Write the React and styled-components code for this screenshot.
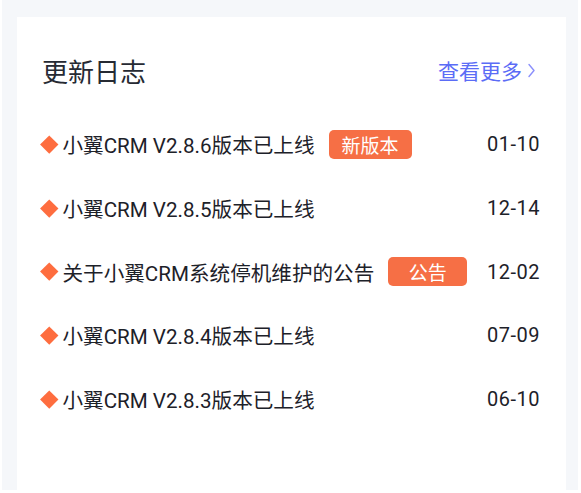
import styled, { createGlobalStyle } from "styled-components";

// --------------------------------------------------

const GlobalStyle = createGlobalStyle`
	body {
		margin: 0;
		background: #ffffff;
		font-family: Roboto, "Noto Sans CJK SC", sans-serif;
	}
`;

const Page = styled.div`
	height: 490px;
	margin: 0 3px 0 2px;
	padding: 17px 12px 0 15px;
	box-sizing: border-box;
	background: #f5f7fa;
`;

const Card = styled.section`
	height: 100%;
	background: #ffffff;
	padding: 30px 26px 0 24px;
	box-sizing: border-box;
`;

const Header = styled.header`
	display: flex;
	align-items: center;
	justify-content: space-between;
	height: 46px;
	padding: 0 5px 0 1px;
	margin-bottom: 19.5px;
`;

const Title = styled.h2`
	margin: 0;
	font-size: 26px;
	font-weight: 400;
	color: #262a33;
`;

const More = styled.a`
	display: flex;
	align-items: center;
	gap: 6px;
	font-size: 21px;
	color: #5b6cf6;
	text-decoration: none;
	cursor: pointer;
`;

const List = styled.ul`
	list-style: none;
	margin: 0;
	padding: 0;
`;

const Row = styled.li`
	display: flex;
	align-items: center;
	height: 63.7px;
	font-size: 20.6px;
	color: #1d2129;
`;

const Diamond = styled.i`
	width: 12.5px;
	height: 12.5px;
	margin: 0 7px 0 2px;
	background: #fe6d3f;
	transform: rotate(45deg);
	flex: none;
`;

const Name = styled.span`
	white-space: nowrap;
`;

const Badge = styled.span`
	min-width: 79px;
	height: 29px;
	margin-left: 14px;
	padding: 0 13px;
	box-sizing: border-box;
	display: inline-flex;
	align-items: center;
	justify-content: center;
	border-radius: 5px;
	background: #f66f45;
	color: #ffffff;
	font-size: 19px;
`;

const Date = styled.span`
	margin-left: auto;
	font-size: 20px;
	font-variant-numeric: tabular-nums;
	letter-spacing: 0.5px;
`;

// --------------------------------------------------

const logs = [
	{ name: "小翼CRM V2.8.6版本已上线", tag: "新版本", date: "01-10" },
	{ name: "小翼CRM V2.8.5版本已上线", date: "12-14" },
	{ name: "关于小翼CRM系统停机维护的公告", tag: "公告", date: "12-02" },
	{ name: "小翼CRM V2.8.4版本已上线", date: "07-09" },
	{ name: "小翼CRM V2.8.3版本已上线", date: "06-10" },
];

const Chevron = () =>
	<svg width = "7" height = "15" viewBox = "0 0 7 15" fill = "none">
		<path d = "M1 1.5 L6 7.5 L1 13.5" stroke = "#8b8ffc" strokeWidth = "1.4" strokeLinecap = "round" strokeLinejoin = "round"/>
	</svg>;

const App = () => (
	<Page>
		<GlobalStyle />
		<Card>
			<Header>
				<Title>更新日志</Title>
				<More>查看更多<Chevron /></More>
			</Header>

			<List>
				{ logs.map(item =>
					<Row key = { item.name }>
						<Diamond />
						<Name>{ item.name }</Name>
						{ item.tag && <Badge>{ item.tag }</Badge> }
						<Date>{ item.date }</Date>
					</Row>
				) }
			</List>
		</Card>
	</Page>
);

export default App;
